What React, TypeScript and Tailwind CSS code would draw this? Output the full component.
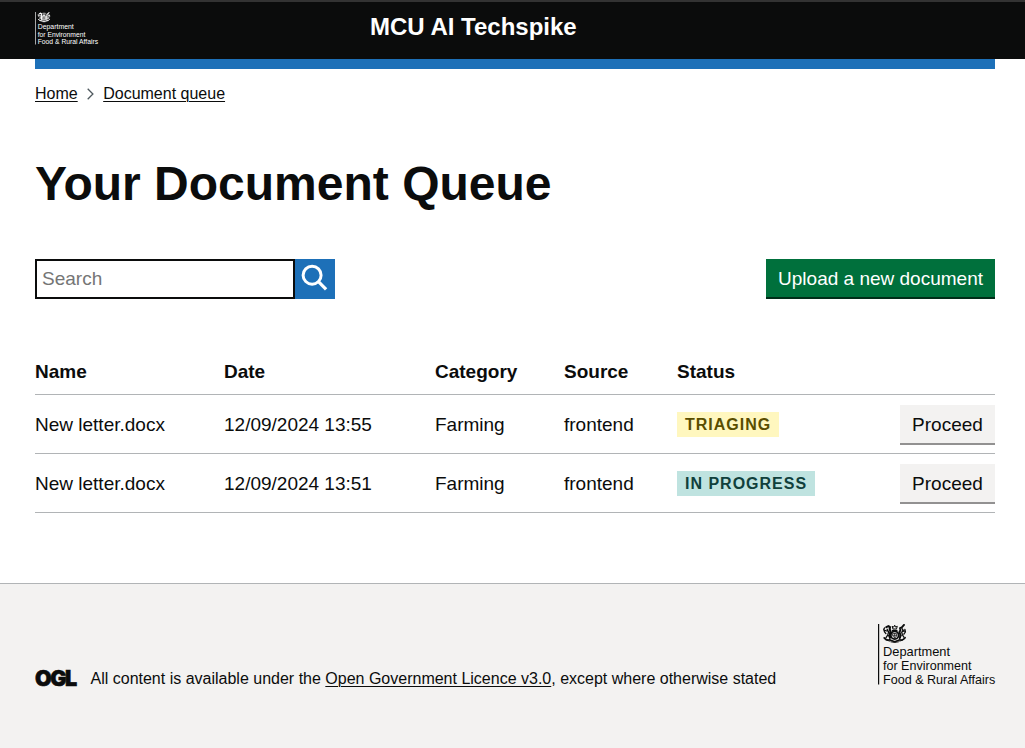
import React from "react";

type Row = { name: string; date: string; category: string; source: string; status: "TRIAGING" | "IN PROGRESS" };

const rows: Row[] = [
  { name: "New letter.docx", date: "12/09/2024 13:55", category: "Farming", source: "frontend", status: "TRIAGING" },
  { name: "New letter.docx", date: "12/09/2024 13:51", category: "Farming", source: "frontend", status: "IN PROGRESS" },
];

const tagStyles: Record<Row["status"], string> = {
  TRIAGING: "bg-[#fff7bf] text-[#594d00]",
  "IN PROGRESS": "bg-[#bfe3e0] text-[#10403c]",
};

function DepartmentLogo({ className }: { className: string }) {
  return (
    <svg viewBox="0 0 118 64" className={className} fill="currentColor" role="img" aria-label="Department for Environment, Food & Rural Affairs">
      <rect x="0" y="0" width="1.2" height="60.5" />
      <g fill="none" stroke="currentColor" strokeLinecap="round" strokeLinejoin="round">
        {/* crown and helm */}
        <path d="M14.8 4.6l-.7-2.3 1.7.8.9-1.9.9 1.9 1.7-.8-.7 2.3z" strokeWidth="1" />
        <path d="M14.6 6.4h4.2" strokeWidth="1.5" />
        {/* shield with garter */}
        <circle cx="16.7" cy="11.2" r="3.9" strokeWidth="1.8" />
        <path d="M14.8 9.5h3.8v2.3q-.4 1.5-1.9 2.1-1.5-.6-1.9-2.1zM16.7 9.5v4.3M14.8 11.3h3.8" strokeWidth="0.7" />
        {/* lion */}
        <path d="M8.3 3.1l2.1-1 1.6 1.1-.3 1.9.8 2.2-.7 3 .2 3" strokeWidth="2.1" />
        <path d="M9.1 5.2l1.5 2.7-.9 3.2-1.7 2.5M8.9 7l-2.2-.7M10.8 11.7l1.3 3.2M7.9 9.6l-1.4-1.8-.8-2.5.9-1.4" strokeWidth="1.3" />
        {/* unicorn */}
        <path d="M26 .9l-2.2 2.5-1.8.7.4 2-.9 1.9.8 2.8-.3 2.8" strokeWidth="1.9" />
        <path d="M24 4.6l1.1 1.5-1.4 2.2.8 2.7 1.4 2.2M24.7 7.3l2.4-.5M23.1 11.5l-1.6 3.2M25.9 10.2l1.5-2.2-.5-2.5" strokeWidth="1.3" />
        {/* compartment and motto ribbon */}
        <path d="M6.2 13.9q2.6 3 5.2 1.9l5.3 2 5.3-2q2.7 1 5.1-2.1" strokeWidth="1.7" />
        <path d="M8.8 16.2l2.9.9M24.6 16.2l-2.9.9M12.9 17.9q3.8 1.2 7.6 0" strokeWidth="0.9" />
      </g>
      <g className="font-['Liberation_Sans',Arial,sans-serif]" fontSize="12.4">
        <text x="5" y="32.4" textLength="67" lengthAdjust="spacingAndGlyphs">Department</text>
        <text x="5" y="46" textLength="88.5" lengthAdjust="spacingAndGlyphs">for Environment</text>
        <text x="5" y="59.6" textLength="112.3" lengthAdjust="spacingAndGlyphs">Food &amp; Rural Affairs</text>
      </g>
    </svg>
  );
}

export default function App() {
  return (
    <div className="flex min-h-[748px] flex-col bg-white font-['Liberation_Sans',Arial,sans-serif] text-[19px] leading-[25px] text-[#0b0c0c]">
      <header className="h-[59px] border-t-2 border-[#333333] bg-[#0b0c0c] pl-[35px] pr-[30px] text-white">
        <div className="flex">
          <div className="w-[335px] pt-[10px]">
            <DepartmentLogo className="h-[34.4px] w-[63.5px]" />
          </div>
          <div className="pt-[10px] text-[24px] font-bold leading-[30px]">MCU AI Techspike</div>
        </div>
      </header>
      <div className="flex grow flex-col pl-[35px] pr-[30px]">
        <div className="h-[10px] bg-[#1d70b8]" />
        <nav className="mt-[15px] flex items-center text-[16px] leading-[20px]">
          <a href="#" className="underline decoration-1 underline-offset-[2px]">Home</a>
          <svg viewBox="0 0 10 12" className="ml-[8px] mr-[7.5px] h-[12px] w-[10px] shrink-0" fill="none" stroke="#505a5f" strokeWidth="1.3">
            <path d="M1.7 .8l5.2 5.2-5.2 5.2" />
          </svg>
          <a href="#" className="underline decoration-1 underline-offset-[2px]">Document queue</a>
        </nav>
        <main>
          <h1 className="mt-[55px] text-[48px] font-bold leading-[50px]">Your Document Queue</h1>
          <div className="mt-[50px] flex h-[40px] justify-between">
            <div className="flex">
              <input className="h-[40px] w-[260px] border-2 border-[#0b0c0c] p-[5px] outline-none placeholder:text-[#757575]" placeholder="Search" aria-label="Search" />
              <button className="flex h-[40px] w-[40px] bg-[#1d70b8] pl-[6px] pt-[5px] text-white" aria-label="Search">
                <svg viewBox="0 0 27 27" className="h-[27px] w-[27px]" fill="none" stroke="currentColor" strokeWidth="3">
                  <circle cx="11.1" cy="11.2" r="9" />
                  <path d="M17.2 17.4l7.9 7.9" strokeWidth="3.2" />
                </svg>
              </button>
            </div>
            <button className="h-[40px] border-b-2 border-[#002d18] bg-[#00703c] px-[12px] text-white">Upload a new document</button>
          </div>
          <table className="mt-[49px] w-full table-fixed border-collapse text-left">
            <colgroup>
              <col className="w-[189px]" />
              <col className="w-[211px]" />
              <col className="w-[129px]" />
              <col className="w-[113px]" />
              <col />
              <col className="w-[95px]" />
            </colgroup>
            <thead>
              <tr className="h-[46px] border-b border-[#b1b4b6]">
                <th className="pt-px">Name</th>
                <th className="pt-px">Date</th>
                <th className="pt-px">Category</th>
                <th className="pt-px">Source</th>
                <th className="pt-px">Status</th>
                <th />
              </tr>
            </thead>
            <tbody>
              {rows.map((row) => (
                <tr key={row.date} className="h-[59px] border-b border-[#b1b4b6]">
                  <td className="pt-[2px]">{row.name}</td>
                  <td className="pt-[2px]">{row.date}</td>
                  <td className="pt-[2px]">{row.category}</td>
                  <td className="pt-[2px]">{row.source}</td>
                  <td className="pt-[2px]">
                    <span className={`block w-fit px-[8px] text-[16px] font-bold leading-[25px] tracking-[1px] ${tagStyles[row.status]}`}>{row.status}</span>
                  </td>
                  <td className="pt-[2px]">
                    <button className="block h-[40px] w-[95px] border-b-2 border-[#929191] bg-[#f3f2f1] pt-[2px]">Proceed</button>
                  </td>
                </tr>
              ))}
            </tbody>
          </table>
        </main>
      </div>
      <footer className="flex h-[165px] justify-between border-t border-[#b1b4b6] bg-[#f3f2f1] pl-[35px] pr-[29px] pt-[40px] text-[16px] leading-[20px]">
        <div className="flex h-[65px] items-end">
          <span className="mb-[1px] w-[41px] whitespace-nowrap font-['Inter',sans-serif] text-[21.5px] font-black leading-[20px] tracking-[-1.5px] [-webkit-text-stroke:0.6px_#0b0c0c]">OGL</span>
          <p className="ml-[14.5px]">
            All content is available under the{" "}
            <a href="#" className="underline decoration-1 underline-offset-[2px]">Open Government Licence v3.0</a>, except where otherwise stated
          </p>
        </div>
        <DepartmentLogo className="h-[64px] w-[118px]" />
      </footer>
    </div>
  );
}
